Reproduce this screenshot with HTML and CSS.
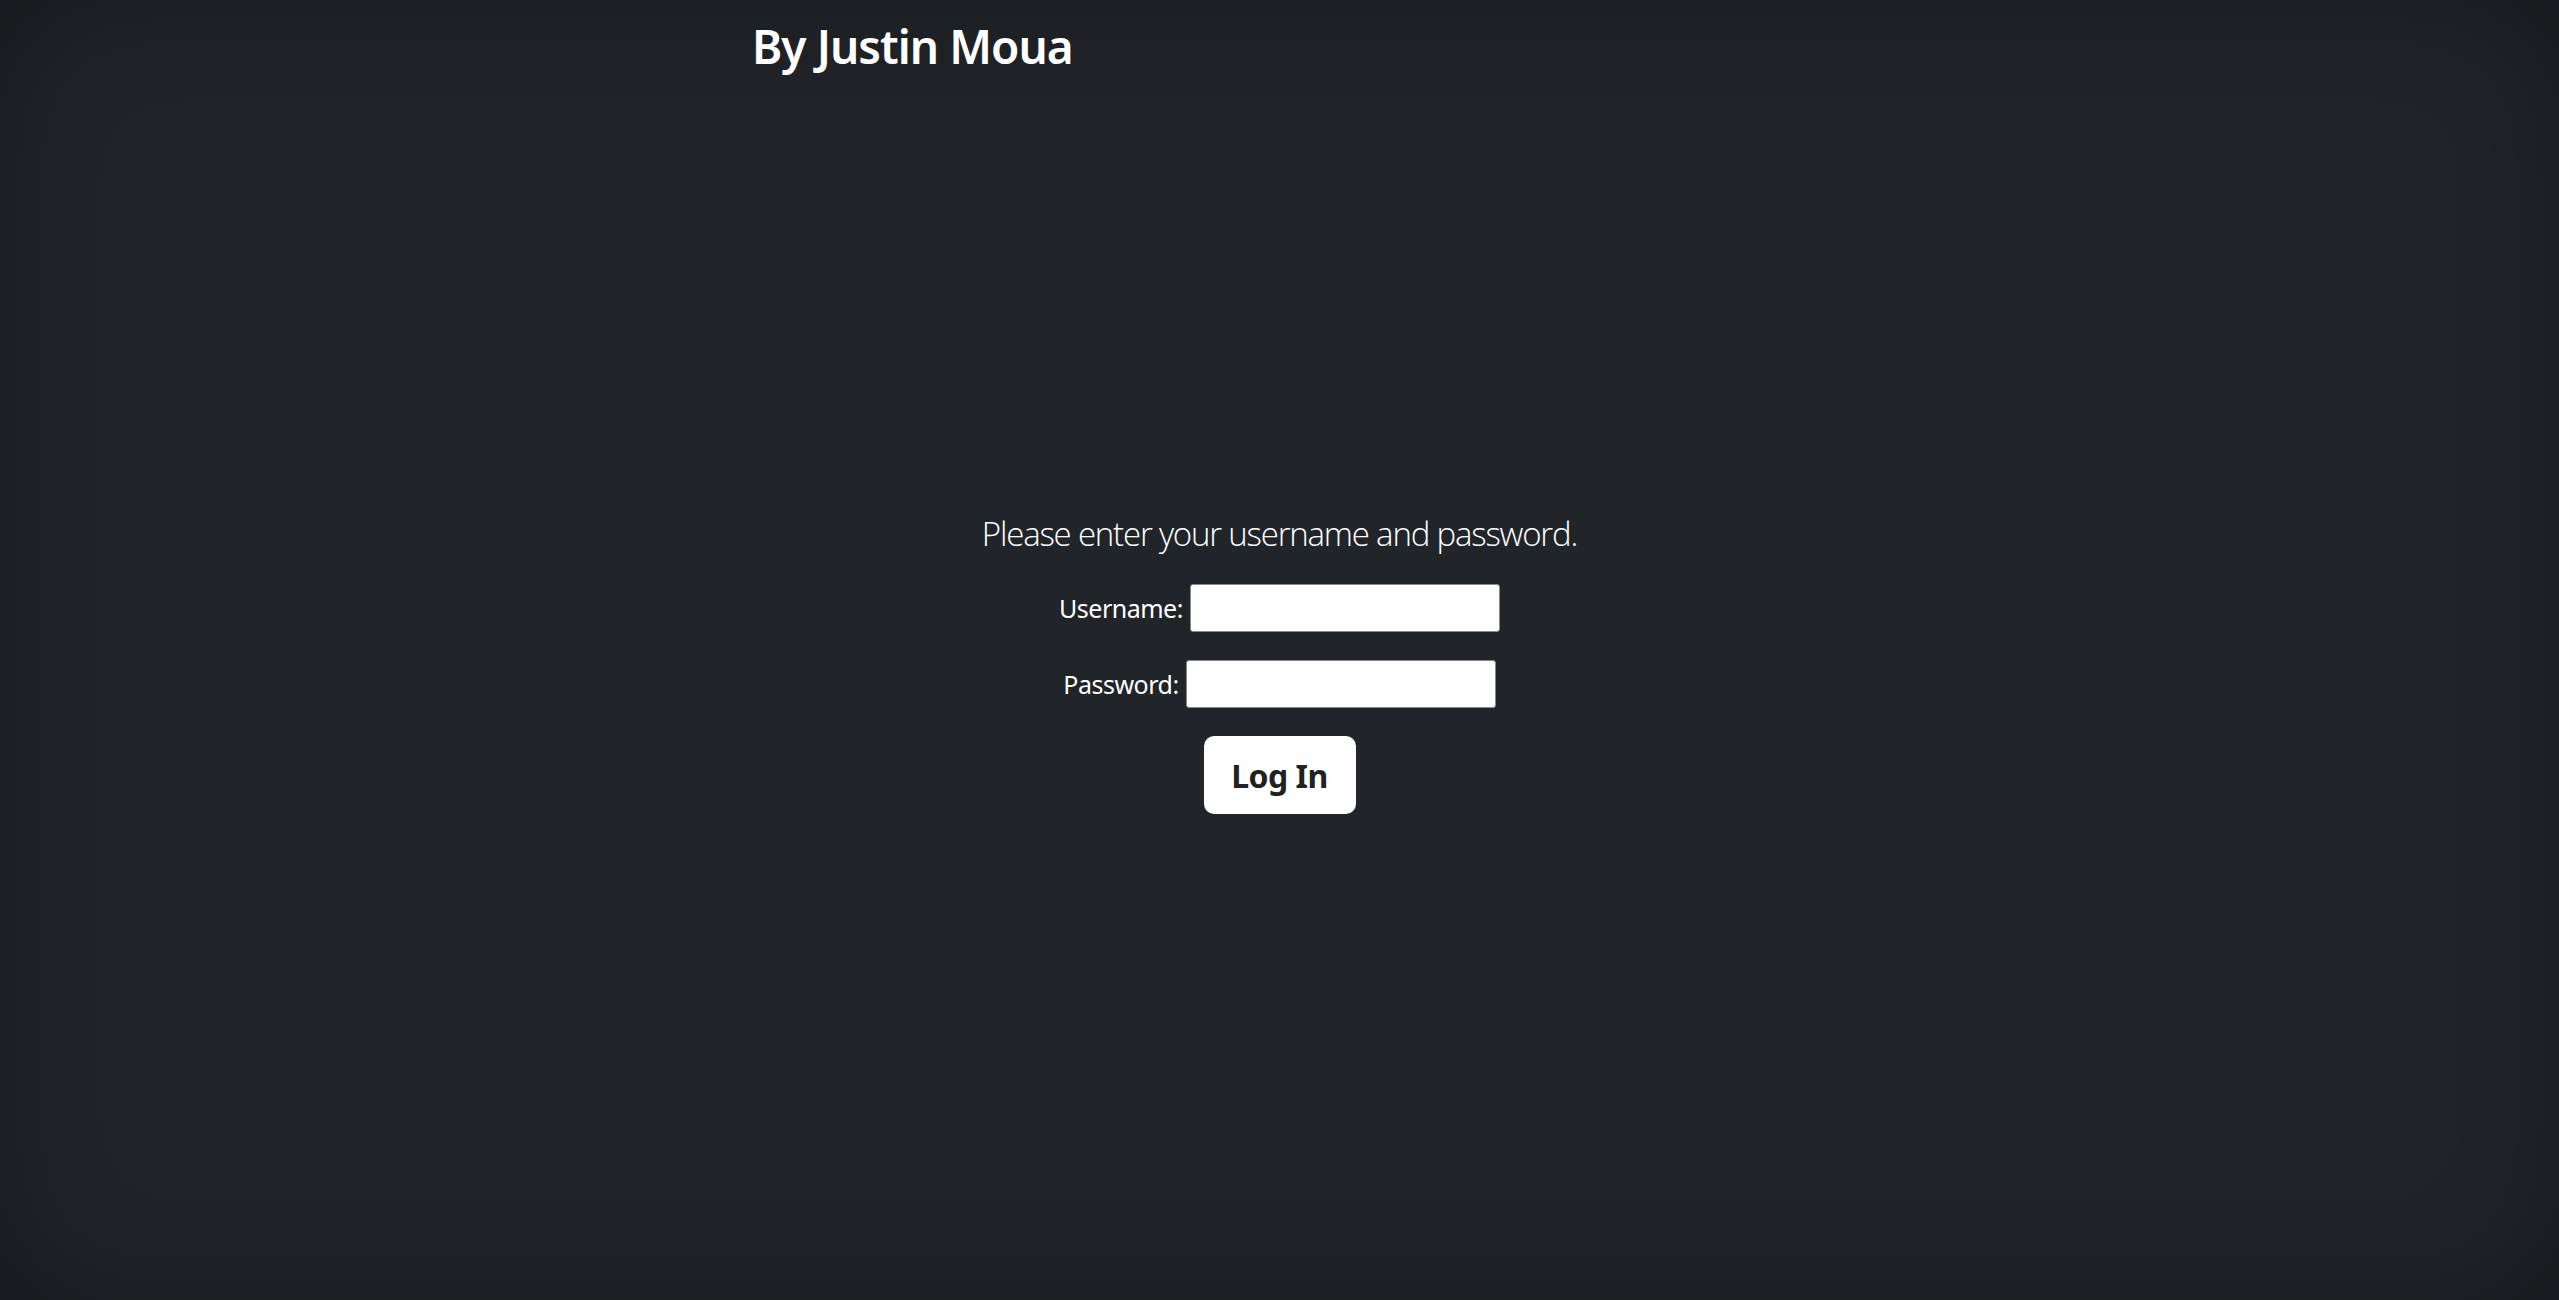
FILE: index.html
```html
<!DOCTYPE html>
<html lang="en">
<head>
<meta charset="utf-8">
<title>Login</title>
<link rel="stylesheet" href="styles.css">
</head>
<body>
<div class="page">
  <header class="head">
    <h1 class="title">By Justin Moua</h1>
  </header>
  <form class="login">
    <p class="prompt">Please enter your username and password.</p>
    <div class="row">
      <label for="u">Username:</label>
      <input id="u" type="text" class="field">
    </div>
    <div class="row">
      <label for="p">Password:</label>
      <input id="p" type="password" class="field">
    </div>
    <div class="row">
      <button type="button" class="btn">Log In</button>
    </div>
  </form>
</div>
</body>
</html>
```
FILE: styles.css
```css
html, body {
  margin: 0;
  padding: 0;
  height: 100%;
}
body {
  background: #212529;
  color: #ffffff;
  font-family: "Noto Sans", "Open Sans", "DejaVu Sans", sans-serif;
}
.page {
  min-height: 100vh;
  box-sizing: border-box;
  box-shadow: inset 0 0 150px rgba(0, 0, 0, 0.32);
  overflow: hidden;
}
.head {
  padding-left: 752px;
}
.title {
  margin: 18px 0 0 0;
  font-size: 46px;
  line-height: 56px;
  font-weight: 600;
  letter-spacing: -0.95px;
}
.login {
  margin-top: 437px;
  display: flex;
  flex-direction: column;
  align-items: center;
}
.prompt {
  margin: 0 0 27px 0;
  font-family: "Open Sans", "Noto Sans", sans-serif;
  font-weight: 300;
  font-size: 33px;
  line-height: 46px;
  letter-spacing: -1.2px;
}
.row {
  display: flex;
  align-items: center;
  justify-content: center;
  gap: 7px;
  margin-bottom: 28px;
}
.row label {
  font-size: 25px;
  letter-spacing: -0.5px;
}
.field {
  width: 310px;
  height: 48px;
  box-sizing: border-box;
  border: 1px solid #8a8a8a;
  border-radius: 3px;
  background: #ffffff;
  margin: 0;
  padding: 2px 6px;
}
.btn {
  width: 152px;
  height: 78px;
  border: none;
  border-radius: 10px;
  background: #ffffff;
  color: #212121;
  font-family: "Noto Sans", "Open Sans", sans-serif;
  font-weight: 700;
  font-size: 32px;
  letter-spacing: -0.5px;
  padding: 0;
}
```
